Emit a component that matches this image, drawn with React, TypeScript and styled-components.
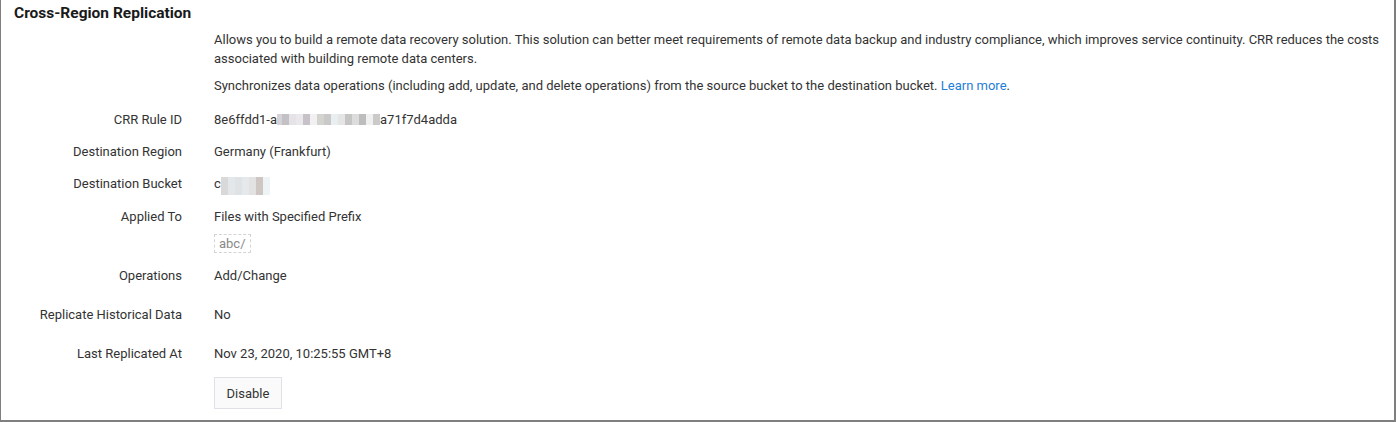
import React from "react";
import styled, { createGlobalStyle } from "styled-components";

const GlobalStyle = createGlobalStyle`
  html, body { margin: 0; padding: 0; background: #fff; }
  body { font-family: Roboto, "Noto Sans", Arial, sans-serif; font-size: 13px; color: #333; }
  * { box-sizing: border-box; }
`;

const Panel = styled.section`
  width: 1396px;
  height: 422px;
  border-left: 1px solid #7f7f7f;
  border-right: 2px solid #7f7f7f;
  border-bottom: 2px solid #7f7f7f;
  padding: 3px 0 0 13px;
  background: #fff;
`;

const Title = styled.h2`
  margin: 0;
  font-size: 15.5px;
  line-height: 20px;
  font-weight: 700;
  color: #1a1a1a;
`;

const Intro = styled.div`
  margin: 7px 0 0 200px;
  width: 1172px;
`;

const Para = styled.p<{ $top?: number }>`
  margin: ${(p) => p.$top ?? 0}px 0 0 0;
  line-height: 19px;
  color: #333;
`;

const Link = styled.a`
  color: #1f7ed8;
  text-decoration: none;
  cursor: pointer;
`;

const Rows = styled.div`
  margin-top: 16px;
  display: flex;
  flex-direction: column;
`;

const Row = styled.div<{ $top: number }>`
  display: grid;
  grid-template-columns: 168px 1fr;
  column-gap: 32px;
  margin-top: ${(p) => p.$top}px;
  line-height: 18px;
`;

const Label = styled.div`
  text-align: right;
  color: #333;
  white-space: nowrap;
`;

const Value = styled.div`
  color: #333;
  white-space: nowrap;
`;

const Tag = styled.span`
  display: inline-block;
  margin-top: 8.7px;
  height: 19px;
  padding: 0 4px;
  border: 1px dashed #d4d4d4;
  color: #8a8a8a;
  font-size: 13px;
  line-height: 17px;
`;

const Mosaic = styled.span<{ $h: number; $shift: number }>`
  display: inline-flex;
  vertical-align: middle;
  height: ${(p) => p.$h}px;
  position: relative;
  top: ${(p) => p.$shift}px;
`;

const Cell = styled.span<{ $w: number }>`
  display: inline-block;
  width: ${(p) => p.$w}px;
  height: 100%;
`;

const Button = styled.button`
  margin-top: 14px;
  width: 68px;
  height: 32px;
  border: 1px solid #dfe1e6;
  background: #fafafa;
  color: #333;
  font-family: Roboto, "Noto Sans", Arial, sans-serif;
  font-size: 13px;
  border-radius: 0;
  padding: 0;
  cursor: pointer;
`;

const idCells: [number, string][] = [
  [5, "#d6d2d6"], [7, "#c3c0c6"], [7, "#e6e3e8"], [7, "#ebe8ec"], [7, "#c7c2c7"],
  [7, "#f2f0f2"], [7, "#d3d3cf"], [7, "#c9c9c9"], [7, "#e9eef0"], [7, "#e5e5e5"],
  [7, "#c5c5c5"], [7, "#dcdcdc"], [7, "#bdbdbd"], [7, "#f0f0f0"], [7, "#cacaca"],
];

const bucketCells: [number, string][] = [
  [7, "#d9d9d9"], [7, "#e4e7ea"], [7, "#dfe3e6"], [7, "#e6e9ec"], [7, "#e2e2e2"],
  [7, "#cdc6c3"], [7, "#eef3f6"],
];

function Blur({ cells, h, shift }: { cells: [number, string][]; h: number; shift: number }) {
  return (
    <Mosaic $h={h} $shift={shift}>
      {cells.map(([w, c], i) => (
        <Cell key={i} $w={w} style={{ background: c }} />
      ))}
    </Mosaic>
  );
}

export default function App() {
  return (
    <>
      <GlobalStyle />
      <Panel>
        <Title>Cross-Region Replication</Title>
        <Intro>
          <Para>
            Allows you to build a remote data recovery solution. This solution can better meet requirements of remote data
            backup and industry compliance, which improves service continuity. CRR reduces the costs associated with
            building remote data centers.
          </Para>
          <Para $top={8}>
            Synchronizes data operations (including add, update, and delete operations) from the source bucket to the
            destination bucket. <Link>Learn more</Link>.
          </Para>
        </Intro>
        <Rows>
          <Row $top={0}>
            <Label>CRR Rule ID</Label>
            <Value>
              8e6ffdd1-a
              <Blur cells={idCells} h={11} shift={-1} />
              a71f7d4adda
            </Value>
          </Row>
          <Row $top={14}>
            <Label>Destination Region</Label>
            <Value>Germany (Frankfurt)</Value>
          </Row>
          <Row $top={14}>
            <Label>Destination Bucket</Label>
            <Value>
              c
              <Blur cells={bucketCells} h={18} shift={1} />
            </Value>
          </Row>
          <Row $top={14}>
            <Label>Applied To</Label>
            <Value>
              <div>Files with Specified Prefix</div>
              <Tag>abc/</Tag>
            </Value>
          </Row>
          <Row $top={14}>
            <Label>Operations</Label>
            <Value>Add/Change</Value>
          </Row>
          <Row $top={21}>
            <Label>Replicate Historical Data</Label>
            <Value>No</Value>
          </Row>
          <Row $top={21}>
            <Label>Last Replicated At</Label>
            <Value>Nov 23, 2020, 10:25:55 GMT+8</Value>
          </Row>
          <Row $top={0}>
            <Label />
            <Value>
              <Button>Disable</Button>
            </Value>
          </Row>
        </Rows>
      </Panel>
    </>
  );
}
